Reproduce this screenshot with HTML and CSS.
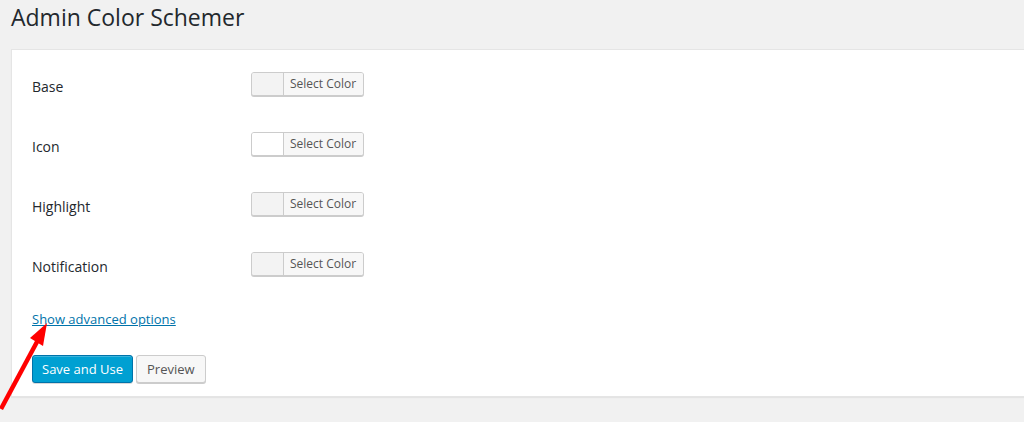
FILE: index.html
```html
<!DOCTYPE html>
<html>
<head>
  <link rel="stylesheet" href="styles.css">
</head>
<body>
  <div class="wrap">
    <h1>Admin Color Schemer</h1>

    <div class="card">
      <div class="color-rows">
        <div class="color-row">
          <span class="row-label">Base</span>
          <button class="color-picker"><span class="swatch swatch-grey"></span><span class="picker-text">Select Color</span></button>
        </div>
        <div class="color-row">
          <span class="row-label">Icon</span>
          <button class="color-picker"><span class="swatch swatch-white"></span><span class="picker-text">Select Color</span></button>
        </div>
        <div class="color-row">
          <span class="row-label">Highlight</span>
          <button class="color-picker"><span class="swatch swatch-grey"></span><span class="picker-text">Select Color</span></button>
        </div>
        <div class="color-row">
          <span class="row-label">Notification</span>
          <button class="color-picker"><span class="swatch swatch-grey"></span><span class="picker-text">Select Color</span></button>
        </div>
      </div>

      <a class="advanced-link" href="#">Show advanced options</a>

      <div class="actions">
        <button class="btn btn-primary">Save and Use</button>
        <button class="btn btn-secondary">Preview</button>
      </div>
    </div>
  </div>

  <svg class="arrow" width="60" height="100" viewBox="0 0 60 100">
    <line x1="1" y1="93" x2="38" y2="24" stroke="#ff0000" stroke-width="4.5" />
    <polygon points="47,7 30,22 43,30" fill="#ff0000" />
  </svg>
</body>
</html>
```

FILE: styles.css
```css
html, body {
  margin: 0;
  padding: 0;
}

body {
  font-family: "Open Sans", "Noto Sans", sans-serif;
  background-color: #f1f1f1;
  color: #23282d;
  width: 1024px;
  height: 422px;
  overflow: hidden;
  position: relative;
}

.wrap {
  margin-left: 11px;
  margin-right: -4px;
}

h1 {
  font-size: 23px;
  font-weight: 400;
  line-height: 29px;
  margin: 0 0 17px;
  padding-top: 3px;
}

.card {
  background: #fff;
  border: 1px solid #e5e5e5;
  box-shadow: 0 1px 1px rgba(0, 0, 0, 0.05);
  padding: 4px 20px 13px 20px;
}

.color-row {
  display: flex;
  align-items: center;
  height: 60px;
}

.row-label {
  width: 219px;
  font-size: 14px;
  padding-top: 4px;
}

.color-picker {
  display: flex;
  align-items: stretch;
  height: 24px;
  padding: 0;
  border: 1px solid #ccc;
  border-radius: 3px;
  box-shadow: 0 1px 0 #ccc;
  background: #f7f7f7;
  overflow: hidden;
  font-family: inherit;
  cursor: pointer;
}

.swatch {
  width: 31px;
}

.swatch-grey {
  background: #f3f3f3;
}

.swatch-white {
  background: #fff;
}

.picker-text {
  border-left: 1px solid #ccc;
  background: #f7f7f7;
  color: #555;
  font-size: 12px;
  line-height: 21px;
  padding: 0 7px 0 6px;
}

.advanced-link {
  display: inline-block;
  margin-top: 16px;
  font-size: 13px;
  color: #0073aa;
  text-decoration: underline;
}

.actions {
  display: flex;
  gap: 3px;
  margin-top: 26px;
}

.btn {
  height: 28px;
  padding: 0 9px 1px;
  font-family: inherit;
  font-size: 13px;
  color: #555;
  background: #f7f7f7;
  border: 1px solid #ccc;
  border-radius: 3px;
  box-shadow: 0 1px 0 #ccc;
  cursor: pointer;
}

.btn-secondary {
  padding: 0 10px 1px;
}

.btn-primary {
  background: #00a0d2;
  border-color: #0073aa;
  color: #fff;
  box-shadow: inset 0 1px 0 rgba(120, 200, 230, 0.5), 0 1px 0 rgba(0, 0, 0, 0.15);
}

.arrow {
  position: absolute;
  left: 0;
  top: 316px;
}
```
